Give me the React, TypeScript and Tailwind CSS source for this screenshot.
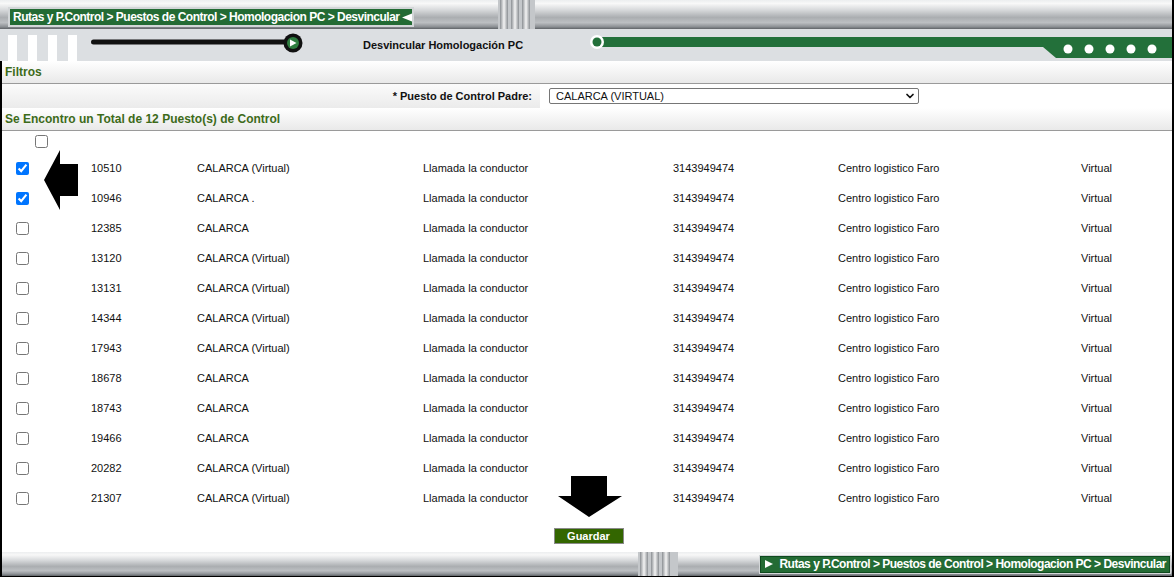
import { ChevronDown } from 'lucide-react';

interface Puesto {
  codigo: string;
  nombre: string;
  marcado: boolean;
}

const puestos: Puesto[] = [
  { codigo: '10510', nombre: 'CALARCA (Virtual)', marcado: true },
  { codigo: '10946', nombre: 'CALARCA .', marcado: true },
  { codigo: '12385', nombre: 'CALARCA', marcado: false },
  { codigo: '13120', nombre: 'CALARCA (Virtual)', marcado: false },
  { codigo: '13131', nombre: 'CALARCA (Virtual)', marcado: false },
  { codigo: '14344', nombre: 'CALARCA (Virtual)', marcado: false },
  { codigo: '17943', nombre: 'CALARCA (Virtual)', marcado: false },
  { codigo: '18678', nombre: 'CALARCA', marcado: false },
  { codigo: '18743', nombre: 'CALARCA', marcado: false },
  { codigo: '19466', nombre: 'CALARCA', marcado: false },
  { codigo: '20282', nombre: 'CALARCA (Virtual)', marcado: false },
  { codigo: '21307', nombre: 'CALARCA (Virtual)', marcado: false },
];

const ruta = 'Rutas y P.Control > Puestos de Control > Homologacion PC > Desvincular';

function Stripes({ width }: { width: string }) {
  return (
    <div className={`${width} h-full flex gap-[3px] px-[2px] bg-[#c4c7ca]`}>
      <div className="w-[8px] h-full bg-[linear-gradient(to_right,#8a8e92,#f4f4f4_50%,#8a8e92)]" />
      <div className="w-[8px] h-full bg-[linear-gradient(to_right,#8a8e92,#f4f4f4_50%,#8a8e92)]" />
      <div className="w-[8px] h-full bg-[linear-gradient(to_right,#8a8e92,#f4f4f4_50%,#8a8e92)]" />
    </div>
  );
}

export default function App() {
  const metal =
    'bg-[linear-gradient(to_bottom,#eceeef_0%,#f8f8f8_12%,#d6d8da_35%,#abaeb1_60%,#bcbfc2_78%,#8d9195_92%,#5f6367_100%)]';

  return (
    <div className="relative w-[1174px] h-[577px] bg-white border-r-2 border-b border-black font-['Liberation_Sans',Arial,sans-serif] text-[#111] overflow-hidden">
      {/* barra superior */}
      <div className={`h-[29px] flex ${metal}`}>
        <div className="ml-[8px] mt-[7px] w-[406px] h-[20px] flex items-center gap-[2px] border-2 border-[#d3d6d8] bg-[#236b34] pl-[3px] text-white text-[12px] font-bold tracking-[-0.5px] whitespace-nowrap">
          <span>{ruta}</span>
          <svg width="11" height="9" viewBox="0 0 11 9">
            <polygon points="0,4.5 11,0 11,9" fill="#fff" />
          </svg>
        </div>
        <div className="ml-[84px]">
          <Stripes width="w-[37px]" />
        </div>
      </div>

      {/* franja decorativa */}
      <div className="h-[32px] flex items-center bg-[#dcdfe2]">
        <div className="h-full pl-[8px] flex items-end gap-[11px]">
          <div className="w-[9px] h-[26px] bg-white" />
          <div className="w-[9px] h-[26px] bg-white" />
          <div className="w-[9px] h-[26px] bg-white" />
          <div className="w-[9px] h-[26px] bg-white" />
        </div>
        <svg className="ml-[14px]" width="213" height="32" viewBox="0 0 213 32">
          <rect x="0" y="10.5" width="200" height="5" rx="2.5" fill="#111" />
          <circle cx="202" cy="14" r="9.5" fill="#111" />
          <circle cx="202" cy="14" r="6" fill="#2e7d3f" />
          <polygon points="199,10.5 199,17.5 205.5,14" fill="#fff" />
        </svg>
        <span className="ml-[59px] text-[11px] font-bold">Desvincular Homologación PC</span>
        <svg className="ml-auto" width="586" height="32" viewBox="0 0 586 32">
          <rect x="11" y="8" width="575" height="10" fill="#23703a" />
          <polygon points="455,8 586,8 586,29 470,29 457,18" fill="#23703a" />
          <circle cx="11" cy="13" r="7" fill="#fff" />
          <circle cx="11" cy="13" r="4.5" fill="#23703a" />
          <circle cx="482" cy="20" r="4.5" fill="#fff" />
          <circle cx="503" cy="20" r="4.5" fill="#fff" />
          <circle cx="524" cy="20" r="4.5" fill="#fff" />
          <circle cx="545" cy="20" r="4.5" fill="#fff" />
          <circle cx="566" cy="20" r="4.5" fill="#fff" />
        </svg>
      </div>

      {/* contenido */}
      <div className="border-l-2 border-black h-[491px] flex flex-col">
        <div className="h-[23px] flex items-center pl-[3px] border-b border-[#9a9a9a] bg-[linear-gradient(to_bottom,#ffffff,#e9e9e9)] text-[12px] font-bold text-[#3d6b1a]">
          Filtros
        </div>

        <div className="h-[24px] flex">
          <div className="w-[538px] flex items-center justify-end pr-[8px] bg-[linear-gradient(to_bottom,#fbfbfb,#ebebeb)] text-[11px] font-bold">
            * Puesto de Control Padre:
          </div>
          <div className="flex-1 flex items-center pl-[9px] bg-white">
            <div className="relative w-[370px] h-[16px]">
              <select
                defaultValue="calarca"
                className="block w-full h-full appearance-none border border-[#767676] rounded-[2px] bg-white pl-[6px] text-[11px] leading-[14px] outline-none"
              >
                <option value="calarca">CALARCA (VIRTUAL)</option>
              </select>
              <ChevronDown
                className="absolute right-[3px] top-[2px] pointer-events-none"
                size={12}
                strokeWidth={3.5}
                color="#111"
              />
            </div>
          </div>
        </div>

        <div className="h-[23px] flex items-center pl-[3px] border-b border-[#9a9a9a] bg-[linear-gradient(to_bottom,#ffffff,#e9e9e9)] text-[12px] font-bold text-[#3d6b1a]">
          Se Encontro un Total de 12 Puesto(s) de Control
        </div>

        <div className="h-[22px] pl-[33px] pt-[4px]">
          <input type="checkbox" className="block w-[13px] h-[13px]" />
        </div>

        {puestos.map((p) => (
          <div
            key={p.codigo}
            className="h-[30px] grid grid-cols-[89px_106px_226px_250px_165px_243px_1fr] items-center text-[11px]"
          >
            <div className="pl-[14px] flex items-center">
              <input type="checkbox" defaultChecked={p.marcado} className="w-[13px] h-[13px]" />
            </div>
            <span>{p.codigo}</span>
            <span>{p.nombre}</span>
            <span>Llamada la conductor</span>
            <span>3143949474</span>
            <span>Centro logistico Faro</span>
            <span>Virtual</span>
          </div>
        ))}

        <div className="mt-[15px] flex justify-center pl-[3px]">
          <button className="w-[70px] h-[16px] bg-[#336600] border border-[#8a8a8a] text-white text-[11px] font-bold leading-none">
            Guardar
          </button>
        </div>
      </div>

      {/* barra inferior */}
      <div className={`border-l-2 border-black h-[24px] flex items-center ${metal}`}>
        <div className="ml-[636px] h-full">
          <Stripes width="w-[40px]" />
        </div>
        <div className="ml-auto mr-[2px] h-[17px] flex items-center gap-[6px] border border-[#0f4a1f] outline outline-1 outline-[#d3d6d8] bg-[#236b34] pl-[4px] pr-[3px] text-white text-[12px] font-bold tracking-[-0.5px] whitespace-nowrap">
          <svg width="8" height="8" viewBox="0 0 8 8">
            <polygon points="0,0 8,4 0,8" fill="#fff" />
          </svg>
          <span>{ruta}</span>
        </div>
      </div>

      {/* flechas de señalamiento */}
      <svg className="absolute left-[43px] top-[150px]" width="36" height="61" viewBox="0 0 36 61">
        <polygon points="1,30 17,0 17,14 35,14 35,46 17,46 17,60" fill="#000" />
      </svg>
      <svg className="absolute left-[557px] top-[476px]" width="66" height="42" viewBox="0 0 66 42">
        <polygon points="14,0 50,0 50,20 65,20 32,41 1,20 14,20" fill="#000" />
      </svg>
    </div>
  );
}
